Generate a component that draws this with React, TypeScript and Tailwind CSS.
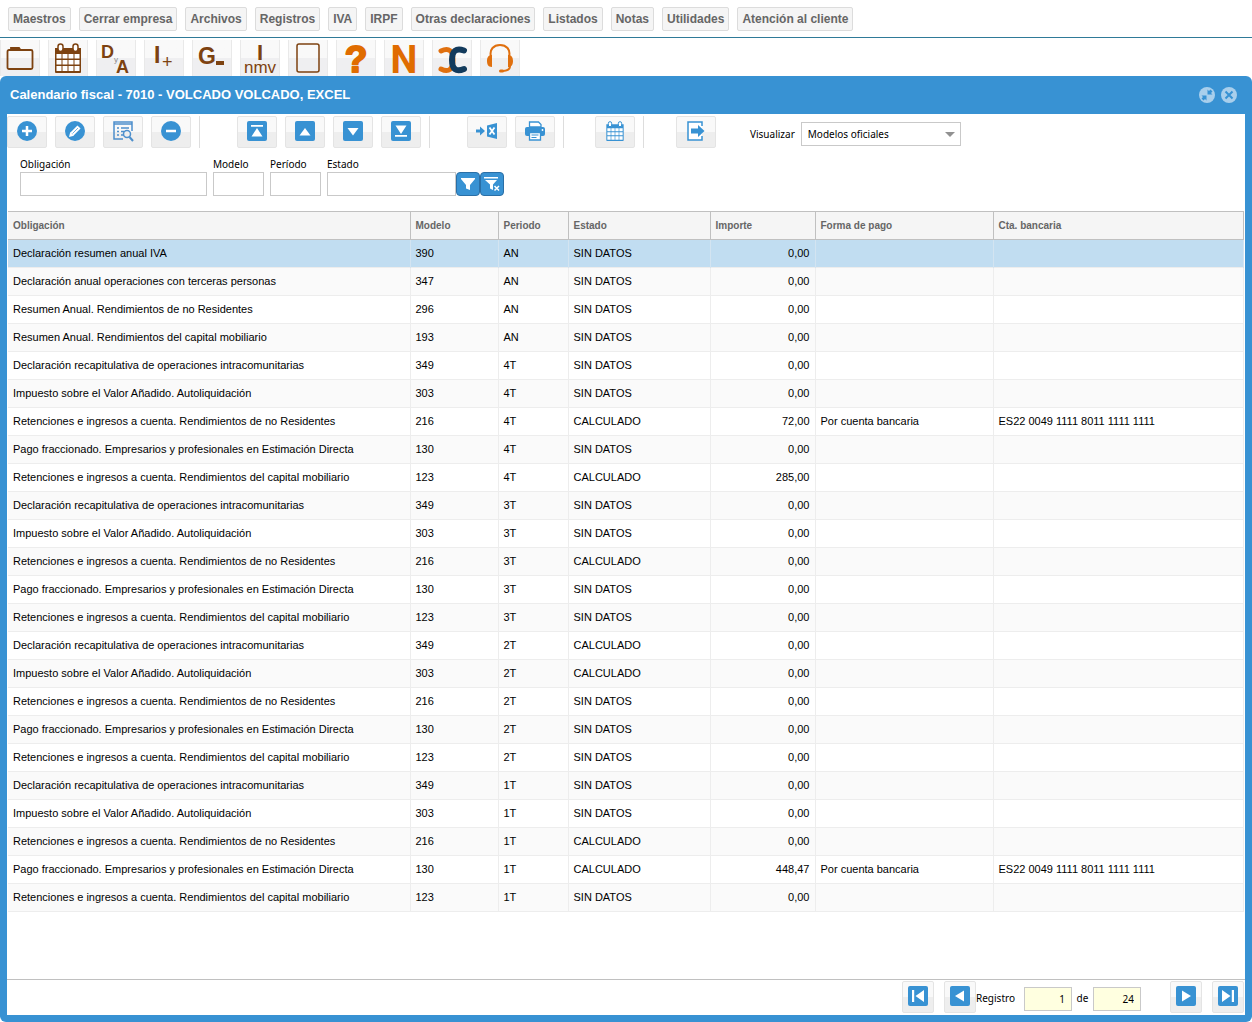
import type { ReactNode } from "react";
import clsx from "clsx";

const MENU = [
  "Maestros",
  "Cerrar empresa",
  "Archivos",
  "Registros",
  "IVA",
  "IRPF",
  "Otras declaraciones",
  "Listados",
  "Notas",
  "Utilidades",
  "Atención al cliente",
];

const DECL_INTRA = "Declaración recapitulativa de operaciones intracomunitarias";
const IVA_AUTO = "Impuesto sobre el Valor Añadido. Autoliquidación";
const RET_NO_RES = "Retenciones e ingresos a cuenta. Rendimientos de no Residentes";
const PAGO_FRAC = "Pago fraccionado. Empresarios y profesionales en Estimación Directa";
const RET_CAP = "Retenciones e ingresos a cuenta. Rendimientos del capital mobiliario";

const COLUMNS = ["Obligación", "Modelo", "Periodo", "Estado", "Importe", "Forma de pago", "Cta. bancaria"];

// obligación, modelo, período, estado, importe, forma de pago, cuenta
const ROWS: string[][] = [
  ["Declaración resumen anual IVA", "390", "AN", "SIN DATOS", "0,00", "", ""],
  ["Declaración anual operaciones con terceras personas", "347", "AN", "SIN DATOS", "0,00", "", ""],
  ["Resumen Anual. Rendimientos de no Residentes", "296", "AN", "SIN DATOS", "0,00", "", ""],
  ["Resumen Anual. Rendimientos del capital mobiliario", "193", "AN", "SIN DATOS", "0,00", "", ""],
  [DECL_INTRA, "349", "4T", "SIN DATOS", "0,00", "", ""],
  [IVA_AUTO, "303", "4T", "SIN DATOS", "0,00", "", ""],
  [RET_NO_RES, "216", "4T", "CALCULADO", "72,00", "Por cuenta bancaria", "ES22 0049 1111 8011 1111 1111"],
  [PAGO_FRAC, "130", "4T", "SIN DATOS", "0,00", "", ""],
  [RET_CAP, "123", "4T", "CALCULADO", "285,00", "", ""],
  [DECL_INTRA, "349", "3T", "SIN DATOS", "0,00", "", ""],
  [IVA_AUTO, "303", "3T", "SIN DATOS", "0,00", "", ""],
  [RET_NO_RES, "216", "3T", "CALCULADO", "0,00", "", ""],
  [PAGO_FRAC, "130", "3T", "SIN DATOS", "0,00", "", ""],
  [RET_CAP, "123", "3T", "SIN DATOS", "0,00", "", ""],
  [DECL_INTRA, "349", "2T", "CALCULADO", "0,00", "", ""],
  [IVA_AUTO, "303", "2T", "CALCULADO", "0,00", "", ""],
  [RET_NO_RES, "216", "2T", "SIN DATOS", "0,00", "", ""],
  [PAGO_FRAC, "130", "2T", "SIN DATOS", "0,00", "", ""],
  [RET_CAP, "123", "2T", "SIN DATOS", "0,00", "", ""],
  [DECL_INTRA, "349", "1T", "SIN DATOS", "0,00", "", ""],
  [IVA_AUTO, "303", "1T", "SIN DATOS", "0,00", "", ""],
  [RET_NO_RES, "216", "1T", "CALCULADO", "0,00", "", ""],
  [PAGO_FRAC, "130", "1T", "CALCULADO", "448,47", "Por cuenta bancaria", "ES22 0049 1111 8011 1111 1111"],
  [RET_CAP, "123", "1T", "SIN DATOS", "0,00", "", ""],
];

function CalendarIcon({ className }: { className: string }) {
  return (
    <svg viewBox="0 0 28 30" className={className} aria-hidden>
      <path fill="currentColor" d="M1 5h26v24a1 1 0 0 1-1 1H2a1 1 0 0 1-1-1z" />
      <rect x="4" y="1" width="5" height="7.500" rx="2.500" fill="#fff" stroke="currentColor" strokeWidth="1.500" />
      <rect x="19" y="1" width="5" height="7.500" rx="2.500" fill="#fff" stroke="currentColor" strokeWidth="1.500" />
      <path
        fill="#fff"
        d="M2.500 11h5v4.500h-5zM8.500 11h5v4.500h-5zM14.500 11h5v4.500h-5zM20.500 11h5v4.500h-5zM2.500 17h5v4.500h-5zM8.500 17h5v4.500h-5zM14.500 17h5v4.500h-5zM20.500 17h5v4.500h-5zM2.500 23h5v5h-5zM8.500 23h5v5h-5zM14.500 23h5v5h-5zM20.500 23h5v5h-5z"
      />
    </svg>
  );
}

function SquareIcon({ children }: { children: ReactNode }) {
  return (
    <svg viewBox="0 0 20 20" className="size-5" aria-hidden>
      <rect width="20" height="20" rx="2" fill="#3892d3" />
      {children}
    </svg>
  );
}

function CircleIcon({ children }: { children: ReactNode }) {
  return (
    <svg viewBox="0 0 20 20" className="size-5" fill="none" stroke="#fff" aria-hidden>
      <circle cx="10" cy="10" r="10" fill="#3892d3" stroke="none" />
      {children}
    </svg>
  );
}

function LetterIcon({ color, children }: { color: string; children: ReactNode }) {
  return (
    <svg
      viewBox="0 0 38 36"
      className="h-9 w-[38px] shrink-0 overflow-visible font-['Liberation_Sans',Arial,sans-serif]"
      fill={color}
      aria-hidden
    >
      {children}
    </svg>
  );
}

function LauncherButton({ label, children }: { label: string; children: ReactNode }) {
  return (
    <button
      type="button"
      aria-label={label}
      className="flex h-9 w-10 items-center justify-center border-x border-[#e9e9e9] bg-linear-to-b from-[#f9f9f9] from-50% to-[#efeff1] to-50%"
    >
      {children}
    </button>
  );
}

function ToolButton({ label, narrow, children }: { label: string; narrow?: boolean; children: ReactNode }) {
  return (
    <button
      type="button"
      aria-label={label}
      className={clsx(
        "flex h-8 shrink-0 items-center justify-center rounded-xs border border-[#e4e4e4] bg-linear-to-b from-[#f9f9f9] from-50% to-[#eeeeee] to-50% pb-0.5 text-[#3892d3]",
        narrow ? "w-8" : "w-10",
      )}
    >
      {children}
    </button>
  );
}

function Separator() {
  return <span className="h-8 w-px bg-[#dddddd]" />;
}

function Field({ id, label, width }: { id: string; label: string; width: string }) {
  return (
    <div className={width}>
      <label htmlFor={id} className="block h-4 leading-4">
        {label}
      </label>
      <input id={id} type="text" className="block h-6 w-full border border-[#c9c9c9] bg-white px-1 outline-none" />
    </div>
  );
}

function Launcher() {
  return (
    <nav aria-label="Accesos directos" className="flex gap-2 pt-0.5">
      <LauncherButton label="Abrir empresa">
        <svg viewBox="0 0 28 24" className="h-6 w-7" fill="none" stroke="#7d4210" strokeWidth="1.800" aria-hidden>
          <rect x="1.500" y="4" width="25" height="19" rx="1.500" />
          <path d="M5 4V2h8l1.500 2z" fill="#7d4210" />
        </svg>
      </LauncherButton>
      <LauncherButton label="Calendario fiscal">
        <CalendarIcon className="h-[30px] w-7 text-[#7d4210]" />
      </LauncherButton>
      <LauncherButton label="Diario y apuntes">
        <LetterIcon color="#7d4210">
          <text x="4" y="18" fontSize="18" fontWeight="bold">D</text>
          <text x="17" y="22" fontSize="8" fill="#8a8a8a">y</text>
          <text x="19" y="33" fontSize="18" fontWeight="bold">A</text>
        </LetterIcon>
      </LauncherButton>
      <LauncherButton label="Ingresos">
        <LetterIcon color="#7d4210">
          <text x="9" y="23" fontSize="23" fontWeight="bold">I</text>
          <text x="17" y="28" fontSize="18">+</text>
        </LetterIcon>
      </LauncherButton>
      <LauncherButton label="Gastos">
        <LetterIcon color="#7d4210">
          <text x="5" y="24" fontSize="23" fontWeight="bold">G</text>
          <rect x="23" y="21" width="8" height="4" />
        </LetterIcon>
      </LauncherButton>
      <LauncherButton label="Inmovilizado">
        <LetterIcon color="#7d4210">
          <text x="16" y="20" fontSize="22" fontWeight="bold">I</text>
          <text x="19" y="33" fontSize="17" textAnchor="middle">nmv</text>
        </LetterIcon>
      </LauncherButton>
      <LauncherButton label="Documento">
        <svg viewBox="0 0 24 30" className="h-[30px] w-6" fill="none" stroke="#7d4210" strokeWidth="1.500" aria-hidden>
          <rect x="1" y="1" width="22" height="28" rx="2" />
        </svg>
      </LauncherButton>
      <LauncherButton label="Ayuda">
        <LetterIcon color="#e06c00">
          <text x="19" y="32" fontSize="37" fontWeight="bold" textAnchor="middle" stroke="#e06c00" strokeWidth="2" strokeLinejoin="round">
            ?
          </text>
        </LetterIcon>
      </LauncherButton>
      <LauncherButton label="Noticias">
        <LetterIcon color="#e06c00">
          <text x="19" y="33" fontSize="38" fontWeight="bold" textAnchor="middle" className="font-[Roboto,sans-serif]">
            N
          </text>
        </LetterIcon>
      </LauncherButton>
      <LauncherButton label="Portal">
        <svg viewBox="0 0 38 36" className="h-9 w-[38px]" fill="none" strokeLinecap="round" aria-hidden>
          <path stroke="#e0700f" strokeWidth="5" d="M8 11c8-4 12 0 12 9s-4 13-12 9" />
          <path stroke="#123a5c" strokeWidth="6" d="M31 10.500C23 7.500 19 11 19 20s4 12.500 12 9" />
        </svg>
      </LauncherButton>
      <LauncherButton label="Soporte">
        <svg viewBox="0 0 28 30" className="h-[30px] w-7" fill="none" stroke="#e0700f" aria-hidden>
          <path strokeWidth="2" d="M5 14C3 6 8 2 14 2s11 4 9 12M24 23c0 4-3 5-8 5" />
          <path fill="#e0700f" stroke="none" d="M6 12v12c-4 0-5-3-5-6s1-6 5-6zM22 12v12c4 0 5-3 5-6s-1-6-5-6z" />
          <rect x="13" y="26.500" width="5" height="3" rx="1.500" fill="#e0700f" stroke="none" />
        </svg>
      </LauncherButton>
    </nav>
  );
}

function Toolbar() {
  return (
    <div role="toolbar" className="flex items-center gap-2 pt-0.5">
      <ToolButton label="Añadir">
        <CircleIcon>
          <path strokeWidth="2.500" d="M10 5v10M5 10h10" />
        </CircleIcon>
      </ToolButton>
      <ToolButton label="Modificar">
        <CircleIcon>
          <path strokeWidth="4.500" d="m7 13 7-7" />
          <path fill="#fff" stroke="none" d="m4 16 1.300-5L9 14.700z" />
          <path stroke="#3892d3" strokeWidth="0.700" d="m7.500 12.500 5.500-5.500" />
        </CircleIcon>
      </ToolButton>
      <ToolButton label="Consultar">
        <svg viewBox="0 0 21 21" className="size-[21px]" fill="none" stroke="#4d8fcc" strokeWidth="1.500" aria-hidden>
          <path d="M10 18H1V1h18v9M1 3h18" />
          <path d="M4 7h2M8 7h8M4 10.500h2M8 10.500h3M4 14h2M8 14h2" />
          <circle cx="14" cy="13" r="3.500" />
          <path strokeWidth="2" d="m16.500 16 3.500 4" />
        </svg>
      </ToolButton>
      <ToolButton label="Eliminar">
        <CircleIcon>
          <path strokeWidth="2.500" d="M5 10h10" />
        </CircleIcon>
      </ToolButton>
      <Separator />
      <span className="w-[21px]" />
      <ToolButton label="Ir al principio">
        <SquareIcon>
          <path fill="#fff" d="M4 4h12v1.800H4zM10 7l5.500 8.500h-11z" />
        </SquareIcon>
      </ToolButton>
      <ToolButton label="Subir">
        <SquareIcon>
          <path fill="#fff" d="m10 7 5.500 7.500h-11z" />
        </SquareIcon>
      </ToolButton>
      <ToolButton label="Bajar">
        <SquareIcon>
          <path fill="#fff" d="M10 14.500 4.500 7h11z" />
        </SquareIcon>
      </ToolButton>
      <ToolButton label="Ir al final">
        <SquareIcon>
          <path fill="#fff" d="M4 14h12v1.800H4zM10 13 4.500 4.500h11z" />
        </SquareIcon>
      </ToolButton>
      <Separator />
      <span className="w-[21px]" />
      <ToolButton label="Exportar a Excel">
        <svg viewBox="0 0 22 16" className="h-4 w-[22px]" aria-hidden>
          <path fill="#3892d3" d="M0 6.500h4V3.500L9 8l-5 4.500v-3H0zM11 2.500 21 0v16l-10-2.500z" />
          <path stroke="#fff" strokeWidth="1.800" d="m13.500 4.500 5 7m0-7-5 7" />
        </svg>
      </ToolButton>
      <ToolButton label="Imprimir">
        <svg viewBox="0 0 20 20" className="size-5" aria-hidden>
          <path fill="#3892d3" d="M2 6h16a2 2 0 0 1 2 2v5a2 2 0 0 1-2 2H2a2 2 0 0 1-2-2V8a2 2 0 0 1 2-2z" />
          <path fill="#fff" stroke="#3892d3" strokeWidth="1.300" d="M4.500 6V1h9L16 3.500V6zM4.500 11.500h11V19h-11z" />
          <path stroke="#3892d3" strokeWidth="1.200" d="M6.500 14h7M6.500 16.500h5" />
          <circle cx="17.500" cy="9" r="0.900" fill="#fff" />
        </svg>
      </ToolButton>
      <Separator />
      <span className="w-[15px]" />
      <ToolButton label="Calendario">
        <CalendarIcon className="size-5" />
      </ToolButton>
      <Separator />
      <span className="w-4" />
      <ToolButton label="Salir">
        <svg viewBox="0 0 18 20" className="h-5 w-[18px]" aria-hidden>
          <path fill="#fff" stroke="#3892d3" strokeWidth="1.500" d="M15 5V1H1v18h14v-4" />
          <path fill="#3892d3" d="M4 7.500h7V4l6.500 6-6.500 6v-3.500H4z" />
        </svg>
      </ToolButton>
      <div className="ml-[26px] flex items-center gap-1.5 pt-1">
        <label htmlFor="visualizar">Visualizar</label>
        <div className="relative">
          <select
            id="visualizar"
            className="block h-6 w-40 appearance-none border border-[#c9c9c9] bg-white px-1.5 outline-none"
          >
            <option>Modelos oficiales</option>
          </select>
          <span className="pointer-events-none absolute top-2.5 right-1.5 border-x-5 border-t-5 border-x-transparent border-t-[#919191]" />
        </div>
      </div>
    </div>
  );
}

function Filters() {
  return (
    <form className="flex items-end gap-1.5 pt-2 pb-[15px] pl-[13px]" onSubmit={(e) => e.preventDefault()}>
      <Field id="f-obligacion" label="Obligación" width="w-[187px]" />
      <Field id="f-modelo" label="Modelo" width="w-[51px]" />
      <Field id="f-periodo" label="Período" width="w-[51px]" />
      <div className="flex items-end">
        <Field id="f-estado" label="Estado" width="w-[129px]" />
        <button
          type="submit"
          aria-label="Filtrar"
          className="flex size-6 items-center justify-center rounded-sm border border-[#2a6fa6] bg-[#3892d3]"
        >
          <svg viewBox="0 0 14 14" className="size-3.5" fill="#fff" aria-hidden>
            <path d="M0 1h14v1L9 8v5l-4-1.500V8L0 2z" />
          </svg>
        </button>
        <button
          type="reset"
          aria-label="Quitar filtro"
          className="flex size-6 items-center justify-center rounded-sm border border-[#2a6fa6] bg-[#3892d3]"
        >
          <svg viewBox="0 0 16 14" className="h-3.5 w-4" fill="#fff" aria-hidden>
            <path d="M0 0h14v1.500H0zM1 3h12L9 7.500V13l-3-1.500v-4z" />
            <path stroke="#3892d3" strokeWidth="3" d="m10.500 9 4.500 4.500M15 9l-4.500 4.500" />
            <path stroke="#fff" strokeWidth="1.500" d="m10.500 9 4.500 4.500M15 9l-4.500 4.500" />
          </svg>
        </button>
      </div>
    </form>
  );
}

function ObligationsTable() {
  return (
    <table className="w-full table-fixed border-collapse font-['Liberation_Sans',Arial,sans-serif] text-[11px]">
      <colgroup>
        <col className="w-[402px]" />
        <col className="w-[88px]" />
        <col className="w-[70px]" />
        <col className="w-[142px]" />
        <col className="w-[105px]" />
        <col className="w-[178px]" />
        <col />
      </colgroup>
      <thead>
        <tr className="h-7 border-y border-[#c0c0c0] bg-[#f5f5f5] text-left text-[10px] text-[#666666]">
          {COLUMNS.map((c) => (
            <th key={c} scope="col" className="border-r border-[#c0c0c0] px-[5px] font-bold">
              {c}
            </th>
          ))}
        </tr>
      </thead>
      <tbody>
        {ROWS.map((row, i) => (
          <tr
            key={`${row[1]}-${row[2]}`}
            aria-selected={i === 0}
            className={clsx(
              "h-7 border-b border-[#ededed]",
              i === 0 ? "bg-[#c1ddf1]" : i % 2 === 1 ? "bg-[#fafafa]" : "bg-white",
            )}
          >
            {row.map((cell, j) => (
              <td
                key={j}
                className={clsx(
                  "truncate border-r px-[5px]",
                  i === 0 ? "border-[#d3e4f1]" : "border-[#ededed]",
                  j === 4 && "text-right",
                )}
              >
                {cell}
              </td>
            ))}
          </tr>
        ))}
      </tbody>
    </table>
  );
}

function Pager() {
  return (
    <div className="flex h-9 items-center justify-end border-t border-[#c0c0c0] pr-px pb-0.5">
      <ToolButton label="Primer registro" narrow>
        <SquareIcon>
          <path fill="#fff" d="M4 4h2.200v12H4zM16 4v12l-8.500-6z" />
        </SquareIcon>
      </ToolButton>
      <span className="w-2.5" />
      <ToolButton label="Registro anterior" narrow>
        <SquareIcon>
          <path fill="#fff" d="M14 4.500v11L5 10z" />
        </SquareIcon>
      </ToolButton>
      <div className="flex items-center pt-1">
        <label htmlFor="registro" className="w-12">
          Registro
        </label>
        <input
          id="registro"
          defaultValue="1"
          className="h-6 w-12 border border-[#c9c9c9] bg-[#ffffe0] px-1.5 text-right outline-none"
        />
        <label htmlFor="total" className="w-[21px] text-center">
          de
        </label>
        <input
          id="total"
          readOnly
          value="24"
          className="h-6 w-12 border border-[#c9c9c9] bg-[#ffffe0] px-1.5 text-right outline-none"
        />
      </div>
      <span className="w-[29px]" />
      <ToolButton label="Registro siguiente" narrow>
        <SquareIcon>
          <path fill="#fff" d="m6 4.500 9 5.500-9 5.500z" />
        </SquareIcon>
      </ToolButton>
      <span className="w-2.5" />
      <ToolButton label="Último registro" narrow>
        <SquareIcon>
          <path fill="#fff" d="M13.800 4H16v12h-2.200zM4 4l8.500 6L4 16z" />
        </SquareIcon>
      </ToolButton>
    </div>
  );
}

export default function App() {
  return (
    <div className="flex min-h-screen flex-col bg-white font-['Noto_Sans',Tahoma,sans-serif] text-[10px] text-black">
      <nav
        aria-label="Menú principal"
        className="flex h-[38px] items-center gap-2 border-b border-[#2f7a98] px-2 font-['Liberation_Sans',Arial,sans-serif] text-xs font-bold text-[#666666]"
      >
        {MENU.map((m) => (
          <button
            key={m}
            type="button"
            className="h-6 rounded-xs border border-[#dcdcdc] bg-[#f5f5f5] px-1 whitespace-nowrap"
          >
            {m}
          </button>
        ))}
      </nav>
      <Launcher />

      <main className="flex flex-1 flex-col rounded-md bg-[#3892d3] px-[7px] pb-[7px]">
        <header className="flex h-[38px] items-center justify-between pr-2 pl-[3px]">
          <h1 className="font-['Liberation_Sans',Arial,sans-serif] text-[13px] font-bold text-white">
            Calendario fiscal - 7010 - VOLCADO VOLCADO, EXCEL
          </h1>
          <div className="flex gap-1.5">
            <button type="button" aria-label="Restaurar">
              <svg viewBox="0 0 16 16" className="size-4" aria-hidden>
                <circle cx="8" cy="8" r="8" fill="#a9cfec" />
                <path fill="#3892d3" d="M8.500 2.500v5h5L12 6l1.500-1.500-2-2L10 4zM7.500 13.500v-5h-5L4 10l-1.500 1.500 2 2L6 12z" />
              </svg>
            </button>
            <button type="button" aria-label="Cerrar">
              <svg viewBox="0 0 16 16" className="size-4" aria-hidden>
                <circle cx="8" cy="8" r="8" fill="#a9cfec" />
                <path stroke="#3892d3" strokeWidth="2" d="m4.500 4.500 7 7m0-7-7 7" />
              </svg>
            </button>
          </div>
        </header>
        <div className="flex flex-1 flex-col bg-white">
          <Toolbar />
          <Filters />
          <div className="flex-1 px-px">
            <ObligationsTable />
          </div>
          <Pager />
        </div>
      </main>
    </div>
  );
}
